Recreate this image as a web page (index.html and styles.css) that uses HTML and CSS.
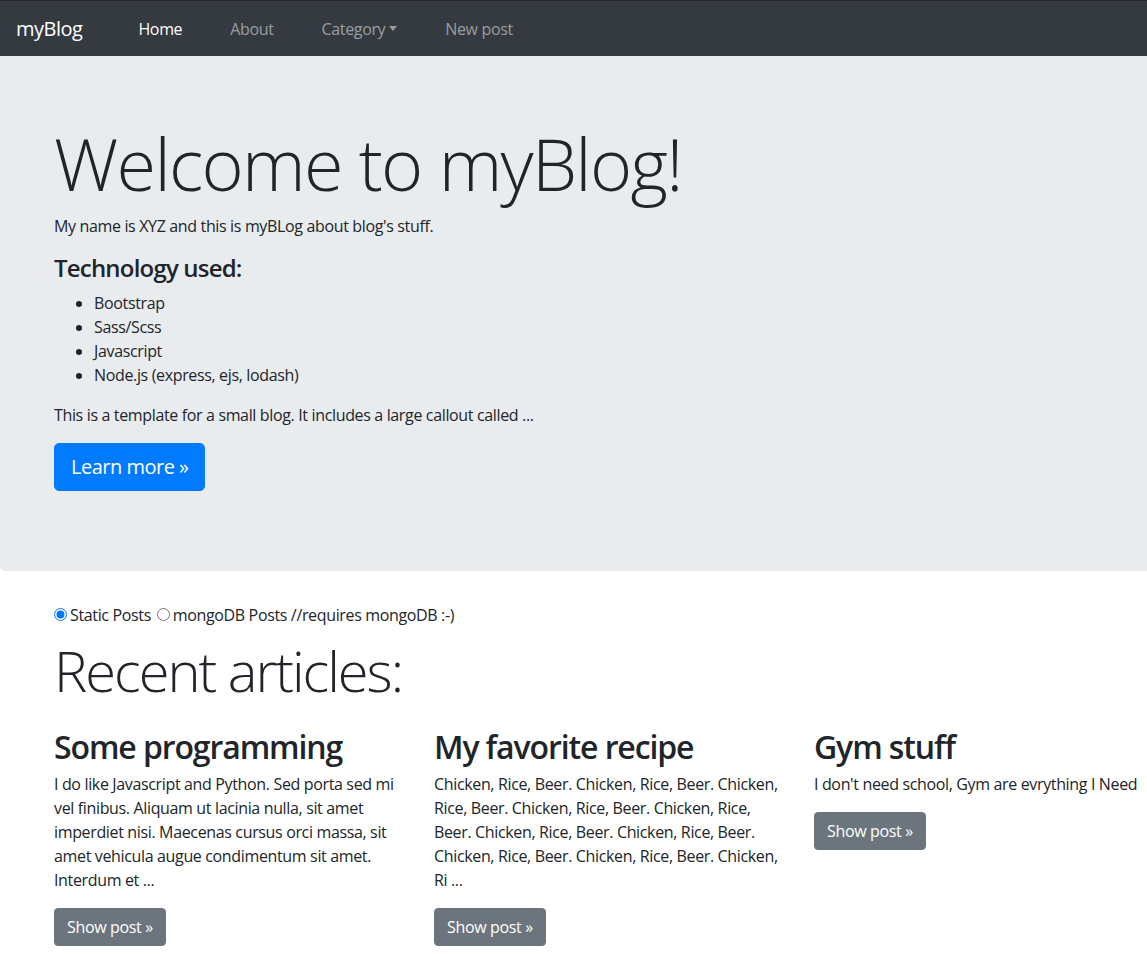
FILE: index.html
```html
<!DOCTYPE html>
<html lang="en">
<head>
<meta charset="utf-8">
<title>myBlog</title>
<link rel="stylesheet" href="styles.css">
</head>
<body>
<nav class="navbar">
  <a class="brand" href="#">myBlog</a>
  <ul class="nav">
    <li><a class="nav-link active" href="#">Home</a></li>
    <li><a class="nav-link" href="#">About</a></li>
    <li><a class="nav-link" href="#">Category<span class="caret"></span></a></li>
    <li><a class="nav-link" href="#">New post</a></li>
  </ul>
</nav>
<main>
  <section class="jumbotron">
    <div class="container">
      <h1 class="display-3">Welcome to myBlog!</h1>
      <p>My name is XYZ and this is myBLog about blog's stuff.</p>
      <h4 class="tech-title">Technology used:</h4>
      <ul class="tech-list">
        <li>Bootstrap</li>
        <li>Sass/Scss</li>
        <li>Javascript</li>
        <li>Node.js (express, ejs, lodash)</li>
      </ul>
      <p>This is a template for a small blog. It includes a large callout called ...</p>
      <p><a class="btn btn-primary btn-lg" href="#">Learn more »</a></p>
    </div>
  </section>
  <div class="container">
    <form class="source-form">
      <input type="radio" name="src" id="static" checked><label for="static">Static Posts</label>
      <input type="radio" name="src" id="mongo"><label for="mongo">mongoDB Posts //requires mongoDB :-)</label>
    </form>
    <h1 class="display-4">Recent articles:</h1>
    <div class="row">
      <div class="col">
        <h2>Some programming</h2>
        <p>I do like Javascript and Python. Sed porta sed mi vel finibus. Aliquam ut lacinia nulla, sit amet imperdiet nisi. Maecenas cursus orci massa, sit amet vehicula augue condimentum sit amet. Interdum et ...</p>
        <p><a class="btn btn-secondary" href="#">Show post »</a></p>
      </div>
      <div class="col">
        <h2>My favorite recipe</h2>
        <p>Chicken, Rice, Beer. Chicken, Rice, Beer. Chicken, Rice, Beer. Chicken, Rice, Beer. Chicken, Rice, Beer. Chicken, Rice, Beer. Chicken, Rice, Beer. Chicken, Rice, Beer. Chicken, Rice, Beer. Chicken, Ri ...</p>
        <p><a class="btn btn-secondary" href="#">Show post »</a></p>
      </div>
      <div class="col">
        <h2>Gym stuff</h2>
        <p>I don't need school, Gym are evrything I Need</p>
        <p><a class="btn btn-secondary" href="#">Show post »</a></p>
      </div>
    </div>
  </div>
</main>
</body>
</html>
```
FILE: styles.css
```css
* { box-sizing: border-box; }
html, body { overflow-x: hidden; }
body {
  margin: 0;
  font-family: "Open Sans", "Noto Sans", sans-serif;
  font-size: 16px;
  line-height: 1.5;
  letter-spacing: -0.35px;
  color: #212529;
  background: #fff;
}
a { text-decoration: none; }
h1, h2, h4, p, ul { margin-top: 0; }

.navbar {
  display: flex;
  align-items: center;
  height: 56px;
  padding: 0 16px;
  background: #343a40;
  border-top: 1px solid #24282c;
}
.brand {
  font-size: 20px;
  line-height: 30px;
  letter-spacing: -0.5px;
  color: #fff;
  margin-right: 32px;
}
.nav {
  display: flex;
  list-style: none;
  margin: 0;
  padding: 0;
}
.nav-link {
  display: block;
  padding: 8px 24px;
  color: rgba(255,255,255,.5);
}
.nav-link.active { color: #fff; }
.caret {
  display: inline-block;
  margin-left: 4px;
  vertical-align: 4px;
  border-top: 5px solid;
  border-left: 4.5px solid transparent;
  border-right: 4.5px solid transparent;
}

.container {
  width: 1140px;
  padding: 0 15px;
  margin-left: 39px;
}

.jumbotron {
  width: 1220px;
  background: #e9ecef;
  padding: 64px 0;
  margin-bottom: 32px;
  border-radius: 0 0 0 5px;
}
.display-3 {
  font-size: 72px;
  font-weight: 300;
  line-height: 1.2;
  letter-spacing: -1.7px;
  margin-bottom: 8px;
}
.jumbotron p { margin-bottom: 16px; }
.tech-title {
  font-size: 24px;
  font-weight: 600;
  line-height: 1.2;
  letter-spacing: -0.8px;
  margin-bottom: 8px;
}
.tech-list {
  margin-bottom: 16px;
  padding-left: 40px;
}

.btn {
  display: inline-block;
  border: 1px solid transparent;
  color: #fff;
  font-size: 16px;
  line-height: 1.5;
  padding: 6px 12px;
  border-radius: 4px;
}
.btn-primary { background: #007bff; border-color: #007bff; }
.btn-secondary { background: #6c757d; border-color: #6c757d; }
.btn-lg {
  font-size: 20px;
  padding: 8px 16px;
  border-radius: 5px;
  letter-spacing: -0.5px;
}

.source-form { margin: 0; }
.source-form input { margin: 3px 3px 0 0; width: 13px; height: 13px; }
.source-form input + label + input { margin-left: 2px; }

.display-4 {
  font-size: 56px;
  font-weight: 300;
  line-height: 1.2;
  letter-spacing: -2px;
  margin: 10px 0 20px;
}

.row {
  display: flex;
  margin: 0 -15px;
}
.col {
  width: 380px;
  flex: 0 0 380px;
  padding: 0 15px;
}
.col h2 {
  font-size: 32px;
  font-weight: 600;
  line-height: 1.2;
  letter-spacing: -1.1px;
  margin: 4px 0 5px;
}
.col p { margin-bottom: 16px; }
```
